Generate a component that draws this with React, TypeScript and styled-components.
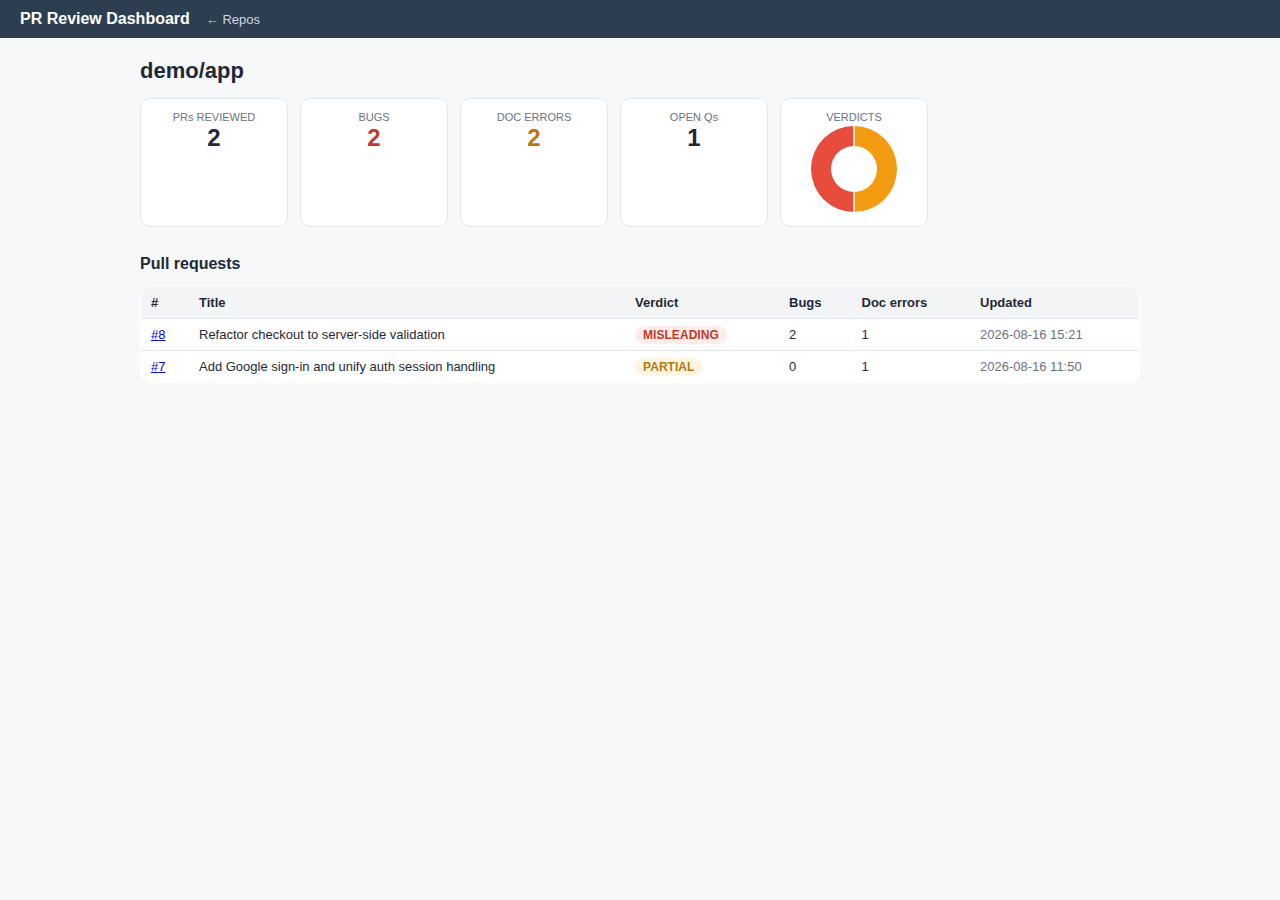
import styled, { createGlobalStyle } from 'styled-components'

const GlobalStyle = createGlobalStyle`
  body {
    margin: 0;
    background: #f6f8fa;
    color: #1f2937;
    font-family: "Liberation Sans", Arial, sans-serif;
    font-size: 13px;
  }
`

const stats = [
  { label: 'PRs REVIEWED', value: 2, color: '#1f2937' },
  { label: 'BUGS', value: 2, color: '#c0392b' },
  { label: 'DOC ERRORS', value: 2, color: '#b9770e' },
  { label: 'OPEN Qs', value: 1, color: '#1f2937' }
]

const pulls = [
  {
    id: 8,
    title: 'Refactor checkout to server-side validation',
    verdict: 'MISLEADING',
    bugs: 2,
    docErrors: 1,
    updated: '2026-08-16 15:21'
  },
  {
    id: 7,
    title: 'Add Google sign-in and unify auth session handling',
    verdict: 'PARTIAL',
    bugs: 0,
    docErrors: 1,
    updated: '2026-08-16 11:50'
  }
]

const App = () => {
  return (
    <>
      <GlobalStyle />
      <TopBar>
        <Brand>PR Review Dashboard</Brand>
        <BackLink href="#">← Repos</BackLink>
      </TopBar>
      <Main>
        <RepoTitle>demo/app</RepoTitle>
        <Cards>
          {stats.map((s) => (
            <Card key={s.label}>
              <CardLabel>{s.label}</CardLabel>
              <CardValue $color={s.color}>{s.value}</CardValue>
            </Card>
          ))}
          <Card>
            <CardLabel>VERDICTS</CardLabel>
            <Donut width="88" height="88" viewBox="0 0 88 88">
              <path d="M44 1a43 43 0 0 1 0 86V67a23 23 0 0 0 0-46z" fill="#f39c12" />
              <path d="M44 1a43 43 0 0 0 0 86V67a23 23 0 0 1 0-46z" fill="#e74c3c" />
              <line x1="44" y1="0" x2="44" y2="22" stroke="#fff" strokeWidth="1.5" />
              <line x1="44" y1="66" x2="44" y2="88" stroke="#fff" strokeWidth="1.5" />
            </Donut>
          </Card>
        </Cards>
        <SectionTitle>Pull requests</SectionTitle>
        <TableCard>
          <Table>
            <colgroup>
              <col width="48" />
              <col width="436" />
              <col width="154" />
              <col width="72.5" />
              <col width="118.5" />
              <col />
            </colgroup>
            <thead>
              <tr>
                <Th>#</Th>
                <Th>Title</Th>
                <Th>Verdict</Th>
                <Th>Bugs</Th>
                <Th>Doc errors</Th>
                <Th>Updated</Th>
              </tr>
            </thead>
            <tbody>
              {pulls.map((pr) => (
                <tr key={pr.id}>
                  <Td>
                    <PrLink href="#">#{pr.id}</PrLink>
                  </Td>
                  <Td>{pr.title}</Td>
                  <Td>
                    <Badge $kind={pr.verdict}>{pr.verdict}</Badge>
                  </Td>
                  <Td>{pr.bugs}</Td>
                  <Td>{pr.docErrors}</Td>
                  <DateCell>{pr.updated}</DateCell>
                </tr>
              ))}
            </tbody>
          </Table>
        </TableCard>
      </Main>
    </>
  )
}

export default App

const TopBar = styled.header`
  display: flex;
  align-items: center;
  gap: 16px;
  height: 38px;
  padding: 0 20px;
  background: #2d3e50;
`
const Brand = styled.span`
  color: #fff;
  font-size: 16px;
  font-weight: 700;
`
const BackLink = styled.a`
  color: #cbd5e0;
  font-size: 13px;
  text-decoration: none;
`
const Main = styled.main`
  width: 1000px;
  margin: 0 auto;
  padding-top: 20px;
`
const RepoTitle = styled.h1`
  margin: 0 0 14px;
  font-size: 22px;
  line-height: 26px;
  font-weight: 700;
  color: #1f2937;
`
const Cards = styled.div`
  display: flex;
  gap: 12px;
  margin-bottom: 27px;
`
const Card = styled.div`
  box-sizing: border-box;
  width: 148px;
  height: 129px;
  padding: 12px 16px;
  background: #fff;
  border: 1px solid #e2e8f0;
  border-radius: 10px;
  text-align: center;
`
const CardLabel = styled.div`
  color: #6b7280;
  font-size: 11px;
  line-height: 13px;
`
const CardValue = styled.div<{ $color: string }>`
  color: ${(p) => p.$color};
  font-size: 24px;
  font-weight: 700;
  line-height: 28px;
`
const Donut = styled.svg`
  display: block;
  margin: 1px auto 0;
`
const SectionTitle = styled.h2`
  margin: 0 0 13px;
  font-size: 16px;
  line-height: 19px;
  font-weight: 700;
  color: #1f2937;
`
const TableCard = styled.div`
  background: #fff;
  border: 1px solid #fff;
  border-radius: 10px;
  overflow: hidden;
`
const Table = styled.table`
  width: 100%;
  table-layout: fixed;
  border-collapse: separate;
  border-spacing: 0;
  font-size: 13px;
`
const Th = styled.th`
  height: 32px;
  padding: 0 10px;
  box-sizing: border-box;
  background: #f3f4f6;
  border-bottom: 1px solid #e2e8f0;
  color: #1f2937;
  font-size: 13px;
  font-weight: 700;
  text-align: left;
`
const Td = styled.td`
  height: 32px;
  padding: 0 10px;
  box-sizing: border-box;
  border-bottom: 1px solid #e2e8f0;
  color: #1f2937;
  tr:last-child & {
    height: 31px;
    border-bottom: 0;
  }
`
const DateCell = styled(Td)`
  color: #6b7280;
`
const PrLink = styled.a`
  color: #0000ee;
`
const Badge = styled.span<{ $kind: string }>`
  display: inline-block;
  padding: 2px 8px;
  border-radius: 10px;
  font-size: 12px;
  line-height: 14px;
  font-weight: 700;
  letter-spacing: 0.05px;
  color: ${(p) => (p.$kind === 'MISLEADING' ? '#c0392b' : '#b9770e')};
  background: ${(p) => (p.$kind === 'MISLEADING' ? '#fdecea' : '#fef5e0')};
`
